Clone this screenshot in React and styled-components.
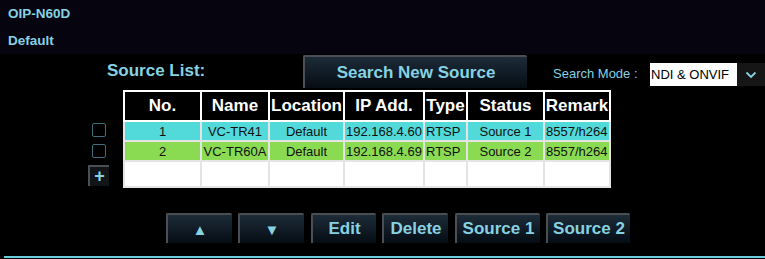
import React from 'react';
import styled, { createGlobalStyle } from 'styled-components';

const GlobalStyle = createGlobalStyle`
  html, body {
    margin: 0;
    padding: 0;
    background: #000;
    font-family: "Liberation Sans", Arial, sans-serif;
  }
`;

const accent = '#86d2e2';

const Page = styled.div`
  width: 765px;
  height: 259px;
  background: #000;
  position: relative;
  overflow: hidden;
`;

const Header = styled.div`
  height: 54px;
  background: #05040f;
  box-sizing: border-box;
  padding: 6px 0 0 8px;
`;

const HeaderLine = styled.div`
  color: ${accent};
  font-weight: bold;
  font-size: 13.5px;
  line-height: 16px;
  margin-bottom: ${({ $gap }) => $gap || 0}px;
`;

const Toolbar = styled.div`
  display: flex;
  align-items: flex-end;
  height: 34px;
  box-sizing: border-box;
  padding-top: 1px;
`;

const ListLabel = styled.div`
  color: ${accent};
  font-weight: bold;
  font-size: 17px;
  width: 196px;
  padding-left: 107px;
  margin-bottom: 7px;
`;

const NavButton = styled.button`
  width: ${({ $w }) => $w}px;
  height: ${({ $h }) => $h || 30}px;
  margin-right: ${({ $mr }) => $mr || 0}px;
  box-sizing: border-box;
  border: none;
  border-top: 2px solid #4a4f55;
  border-left: 2px solid #4a4f55;
  border-radius: 2px 2px 0 0;
  background: linear-gradient(#1d2c38, #050c14);
  color: ${accent};
  font-family: "Liberation Sans", Arial, sans-serif;
  font-weight: bold;
  font-size: ${({ $fs }) => $fs || 17}px;
  padding: 0;
  display: flex;
  align-items: center;
  justify-content: center;
`;

const ModeLabel = styled.div`
  color: ${accent};
  font-size: 13px;
  margin-left: 26px;
  width: 97px;
  margin-bottom: 7px;
`;

const Select = styled.div`
  display: flex;
  height: 23px;
  margin-bottom: 2px;
`;

const SelectValue = styled.div`
  width: 87px;
  background: #fff;
  color: #000;
  font-size: 13px;
  line-height: 23px;
  padding-left: 1px;
  box-sizing: border-box;
  white-space: nowrap;
`;

const SelectArrow = styled.div`
  width: 28px;
  background: #161616;
  display: flex;
  align-items: center;
  justify-content: center;
`;

const Content = styled.div`
  display: flex;
  margin-top: 2px;
`;

const SideColumn = styled.div`
  width: 35px;
  margin-left: 88px;
  padding-top: 33px;
  display: flex;
  flex-direction: column;
  align-items: flex-start;
`;

const Check = styled.div`
  width: 14px;
  height: 14px;
  margin-left: 4px;
  margin-bottom: 7px;
  border: 1px solid #3c6f7c;
  border-radius: 2px;
  box-sizing: border-box;
`;

const AddButton = styled.div`
  width: 21px;
  height: 21px;
  box-sizing: border-box;
  border-top: 2px solid #4a4f55;
  border-left: 2px solid #4a4f55;
  background: #111518;
  color: ${accent};
  font-weight: bold;
  font-size: 18px;
  line-height: 18px;
  text-align: center;
`;

const Table = styled.table`
  border-collapse: collapse;
  border: 2px solid #fff;
  table-layout: fixed;
  width: 486px;
`;

const Th = styled.th`
  height: 28px;
  border: 2px solid #fff;
  background: #000;
  color: #fff;
  font-size: 17px;
  font-weight: bold;
  padding: 0;
  white-space: nowrap;
  overflow: hidden;
`;

const Tr = styled.tr`
  background: ${({ $bg }) => $bg};
`;

const Td = styled.td`
  height: ${({ $h }) => $h || 18}px;
  border: 2px solid #e4e4e4;
  border-top-color: ${({ $first }) => ($first ? '#fff' : '#e4e4e4')};
  color: #111;
  font-size: 13px;
  padding: 0 1px;
  text-align: ${({ $left }) => ($left ? 'left' : 'center')};
  white-space: nowrap;
  overflow: hidden;
`;

const Footer = styled.div`
  display: flex;
  margin-top: 25px;
  padding-left: 166px;
`;

const BottomLine = styled.div`
  position: absolute;
  left: 4px;
  right: 0;
  bottom: 1px;
  height: 2px;
  background: #6ccbdc;
`;

const columns = [
  { label: 'No.', w: 77 },
  { label: 'Name', w: 68 },
  { label: 'Location', w: 75 },
  { label: 'IP Add.', w: 80 },
  { label: 'Type', w: 43 },
  { label: 'Status', w: 77 },
  { label: 'Remark', w: 66 },
];

const rows = [
  { bg: '#52d9d9', cells: ['1', 'VC-TR41', 'Default', '192.168.4.60', 'RTSP', 'Source 1', '8557/h264'] },
  { bg: '#8adb52', cells: ['2', 'VC-TR60A', 'Default', '192.168.4.69', 'RTSP', 'Source 2', '8557/h264'] },
];

const leftCols = [3, 4, 6];

export default function App() {
  return (
    <Page>
      <GlobalStyle />
      <Header>
        <HeaderLine $gap={11}>OIP-N60D</HeaderLine>
        <HeaderLine>Default</HeaderLine>
      </Header>
      <Toolbar>
        <ListLabel>Source List:</ListLabel>
        <NavButton $w={224} $h={33}>Search New Source</NavButton>
        <ModeLabel>Search Mode :</ModeLabel>
        <Select>
          <SelectValue>NDI &amp; ONVIF</SelectValue>
          <SelectArrow>
            <svg width="12" height="8" viewBox="0 0 12 8">
              <path d="M1.5 1.5 L6 6 L10.5 1.5" stroke={accent} strokeWidth="1.8" fill="none" />
            </svg>
          </SelectArrow>
        </Select>
      </Toolbar>
      <Content>
        <SideColumn>
          <Check />
          <Check />
          <AddButton>+</AddButton>
        </SideColumn>
        <Table>
          <colgroup>
            {columns.map((c) => (
              <col key={c.label} style={{ width: c.w }} />
            ))}
          </colgroup>
          <thead>
            <tr>
              {columns.map((c) => (
                <Th key={c.label}>{c.label}</Th>
              ))}
            </tr>
          </thead>
          <tbody>
            {rows.map((r, i) => (
              <Tr key={i} $bg={r.bg}>
                {r.cells.map((c, j) => (
                  <Td key={j} $first={i === 0} $left={leftCols.includes(j)}>{c}</Td>
                ))}
              </Tr>
            ))}
            <Tr $bg="#fff">
              {columns.map((c) => (
                <Td key={c.label} $h={24} />
              ))}
            </Tr>
          </tbody>
        </Table>
      </Content>
      <Footer>
        <NavButton $w={66} $mr={6} $fs={15}>▲</NavButton>
        <NavButton $w={66} $mr={7} $fs={15}>▼</NavButton>
        <NavButton $w={65} $mr={6}>Edit</NavButton>
        <NavButton $w={66} $mr={7}>Delete</NavButton>
        <NavButton $w={85} $mr={6}>Source 1</NavButton>
        <NavButton $w={84}>Source 2</NavButton>
      </Footer>
      <BottomLine />
    </Page>
  );
}
